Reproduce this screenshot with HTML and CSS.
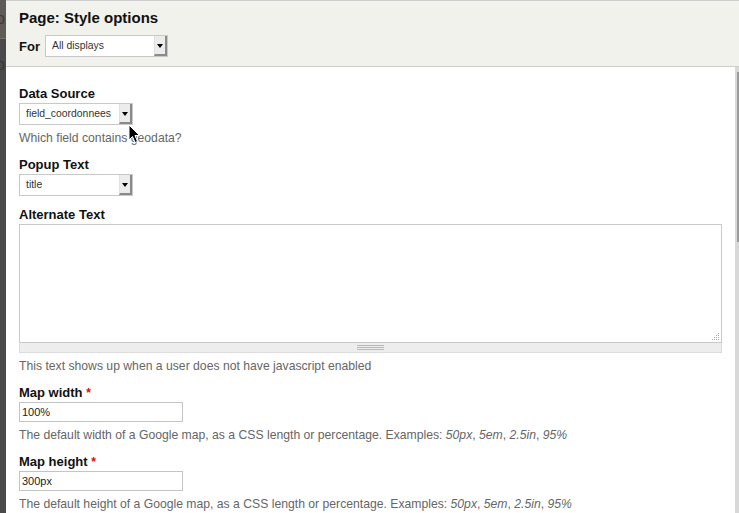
FILE: index.html
```html
<html>
<head>
	<title>Page: Style options</title>
	<meta http-equiv="Content-Type" content="text/html; charset=UTF-8">
	<link rel="stylesheet" href="styles.css">
</head>
<body>
	<div class="screen">
		<div class="backdrop">
			<div class="backdrop-top"><span class="backdrop-glyph">p</span></div>
			<div class="backdrop-rest"><span class="backdrop-glyph">o</span></div>
		</div>

		<div class="dialog">
			<div class="dialog-head">
				<h1 class="dialog-title">Page: Style options</h1>
				<div class="display-row">
					<span class="head-label">For</span>
					<div class="select select-display">
						<span class="select-value">All displays</span>
						<span class="select-button"><span class="select-arrow"></span></span>
					</div>
				</div>
			</div>

			<div class="dialog-body">
				<div class="form">
					<div class="form-item">
						<label class="form-label">Data Source</label>
						<div class="select select-field">
							<span class="select-value">field_coordonnees</span>
							<span class="select-button"><span class="select-arrow"></span></span>
						</div>
						<div class="description">Which field contains geodata?</div>
					</div>

					<div class="form-item">
						<label class="form-label">Popup Text</label>
						<div class="select select-field">
							<span class="select-value">title</span>
							<span class="select-button"><span class="select-arrow"></span></span>
						</div>
					</div>

					<div class="form-item">
						<label class="form-label">Alternate Text</label>
						<div class="textarea-wrap">
							<div class="textarea-box">
								<textarea class="textarea"></textarea>
								<svg class="resize-dots" width="8" height="8" viewBox="0 0 8 8">
									<rect x="6" y="0" width="1" height="1" fill="#aaa"/>
									<rect x="4" y="2" width="1" height="1" fill="#aaa"/>
									<rect x="6" y="2" width="1" height="1" fill="#aaa"/>
									<rect x="2" y="4" width="1" height="1" fill="#aaa"/>
									<rect x="4" y="4" width="1" height="1" fill="#aaa"/>
									<rect x="6" y="4" width="1" height="1" fill="#aaa"/>
									<rect x="0" y="6" width="1" height="1" fill="#aaa"/>
									<rect x="2" y="6" width="1" height="1" fill="#aaa"/>
									<rect x="4" y="6" width="1" height="1" fill="#aaa"/>
									<rect x="6" y="6" width="1" height="1" fill="#aaa"/>
								</svg>
							</div>
							<div class="grippie"><span class="grippie-lines"></span></div>
						</div>
						<div class="description">This text shows up when a user does not have javascript enabled</div>
					</div>

					<div class="form-item">
						<label class="form-label">Map width <span class="required">*</span></label>
						<input class="text-input" type="text" value="100%">
						<div class="description">The default width of a Google map, as a CSS length or percentage. Examples: <em>50px</em>, <em>5em</em>, <em>2.5in</em>, <em>95%</em></div>
					</div>

					<div class="form-item">
						<label class="form-label">Map height <span class="required">*</span></label>
						<input class="text-input" type="text" value="300px">
						<div class="description">The default height of a Google map, as a CSS length or percentage. Examples: <em>50px</em>, <em>5em</em>, <em>2.5in</em>, <em>95%</em></div>
					</div>
				</div>

				<div class="scrollbar"><div class="scrollbar-thumb"></div></div>
			</div>
		</div>
	</div>

	<svg class="cursor" width="13" height="20" viewBox="0 0 13 20">
		<path d="M1 1 L1 16 L4.5 12.5 L7 18.5 L9.5 17.5 L7 11.5 L11.5 11.5 Z" fill="#000" stroke="#fff" stroke-width="1"/>
	</svg>
</body>
</html>
```

FILE: styles.css
```css
	html, body {
		margin: 0;
		padding: 0;
		height: 100%;
		overflow: hidden;
		background-color: #4d4d4d;
		font-family: "Liberation Sans", Arial, sans-serif;
	}

	.screen {
		display: flex;
		height: 513px;
		overflow: hidden;
	}

	/* page behind the overlay */
	.backdrop {
		width: 6px;
		flex: none;
		display: flex;
		flex-direction: column;
		overflow: hidden;
		background-color: #4a4a4a;
	}

	.backdrop-top {
		height: 38px;
		background-color: #5f5c58;
		border-bottom: 1px solid #757270;
	}

	.backdrop-rest {
		flex: 1;
	}

	.backdrop-glyph {
		display: block;
		margin-left: -4px;
		font-size: 16px;
		line-height: 20px;
		color: #3d3b38;
	}

	.backdrop-top .backdrop-glyph {
		margin-top: 9px;
	}

	.backdrop-rest .backdrop-glyph {
		margin-top: 16px;
		color: #383838;
	}

	.dialog {
		flex: 1;
		display: flex;
		flex-direction: column;
		min-width: 0;
		background-color: #fff;
		border-top: 1px solid #cdcdcd;
	}

	.dialog-head {
		background-color: #f2f2ec;
		border-bottom: 1px solid #cdcdcd;
		padding: 8px 13px 9px 13px;
	}

	.dialog-title {
		margin: 0;
		font-size: 15px;
		line-height: 18px;
		font-weight: bold;
		color: #111;
	}

	.display-row {
		display: flex;
		align-items: center;
		gap: 5px;
		margin-top: 8px;
	}

	.head-label {
		font-size: 13px;
		font-weight: bold;
		color: #111;
	}

	/* selects */
	.select {
		display: flex;
		height: 22px;
		box-sizing: border-box;
		border: 1px solid #c9c9c9;
		background-color: #fff;
	}

	.select-display {
		width: 123px;
	}

	.select-field {
		width: 114px;
	}

	.select-value {
		flex: 1;
		padding-left: 6px;
		font-size: 10.4px;
		line-height: 20px;
		color: #333;
		white-space: nowrap;
		overflow: hidden;
	}

	.select-button {
		width: 10px;
		flex: none;
		display: flex;
		align-items: center;
		justify-content: center;
		background-color: #ececec;
		border-right: 2px solid #8a8a8a;
		border-bottom: 2px solid #8a8a8a;
		border-left: 1px solid #e0e0e0;
	}

	.select-arrow {
		width: 0;
		height: 0;
		border-left: 3px solid transparent;
		border-right: 3px solid transparent;
		border-top: 4px solid #000;
		margin-top: 1px;
	}

	.dialog-body {
		flex: 1;
		display: flex;
		min-height: 0;
	}

	.form {
		flex: 1;
		min-width: 0;
		padding: 18px 13px 0 13px;
	}

	.form-item {
		margin-bottom: 10px;
	}

	.form-label {
		display: block;
		font-size: 13px;
		line-height: 18px;
		font-weight: bold;
		color: #111;
	}

	.required {
		color: #e00;
		font-size: 12px;
	}

	.description {
		margin-top: 5px;
		margin-bottom: 2px;
		font-size: 12.2px;
		line-height: 16px;
		color: #666;
	}

	/* textarea with grippie */
	.textarea-box {
		position: relative;
	}

	.textarea {
		display: block;
		width: 100%;
		height: 119px;
		box-sizing: border-box;
		margin: 0;
		border: 1px solid #c9c9c9;
		resize: none;
		background-color: #fff;
	}

	.resize-dots {
		position: absolute;
		right: 2px;
		bottom: 2px;
	}

	.grippie {
		height: 10px;
		box-sizing: border-box;
		display: flex;
		align-items: center;
		justify-content: center;
		background-color: #ededed;
		border: 1px solid #dcdcdc;
		border-top: none;
	}

	.grippie-lines {
		width: 27px;
		height: 5px;
		background: repeating-linear-gradient(#b9b9b9 0 1px, transparent 1px 2px);
	}

	.text-input {
		display: block;
		width: 164px;
		height: 20px;
		box-sizing: border-box;
		margin: 0;
		padding: 0 2px;
		border: 1px solid #c4c4c4;
		font-family: "Liberation Sans", Arial, sans-serif;
		font-size: 11px;
		color: #222;
	}

	.scrollbar {
		width: 4px;
		flex: none;
		background-color: #d8d8d8;
		display: flex;
		justify-content: flex-end;
	}

	.scrollbar-thumb {
		width: 2px;
		height: 170px;
		margin-top: 5px;
		background-color: #9b9b9b;
	}

	.cursor {
		position: absolute;
		left: 128px;
		top: 124px;
	}
```
